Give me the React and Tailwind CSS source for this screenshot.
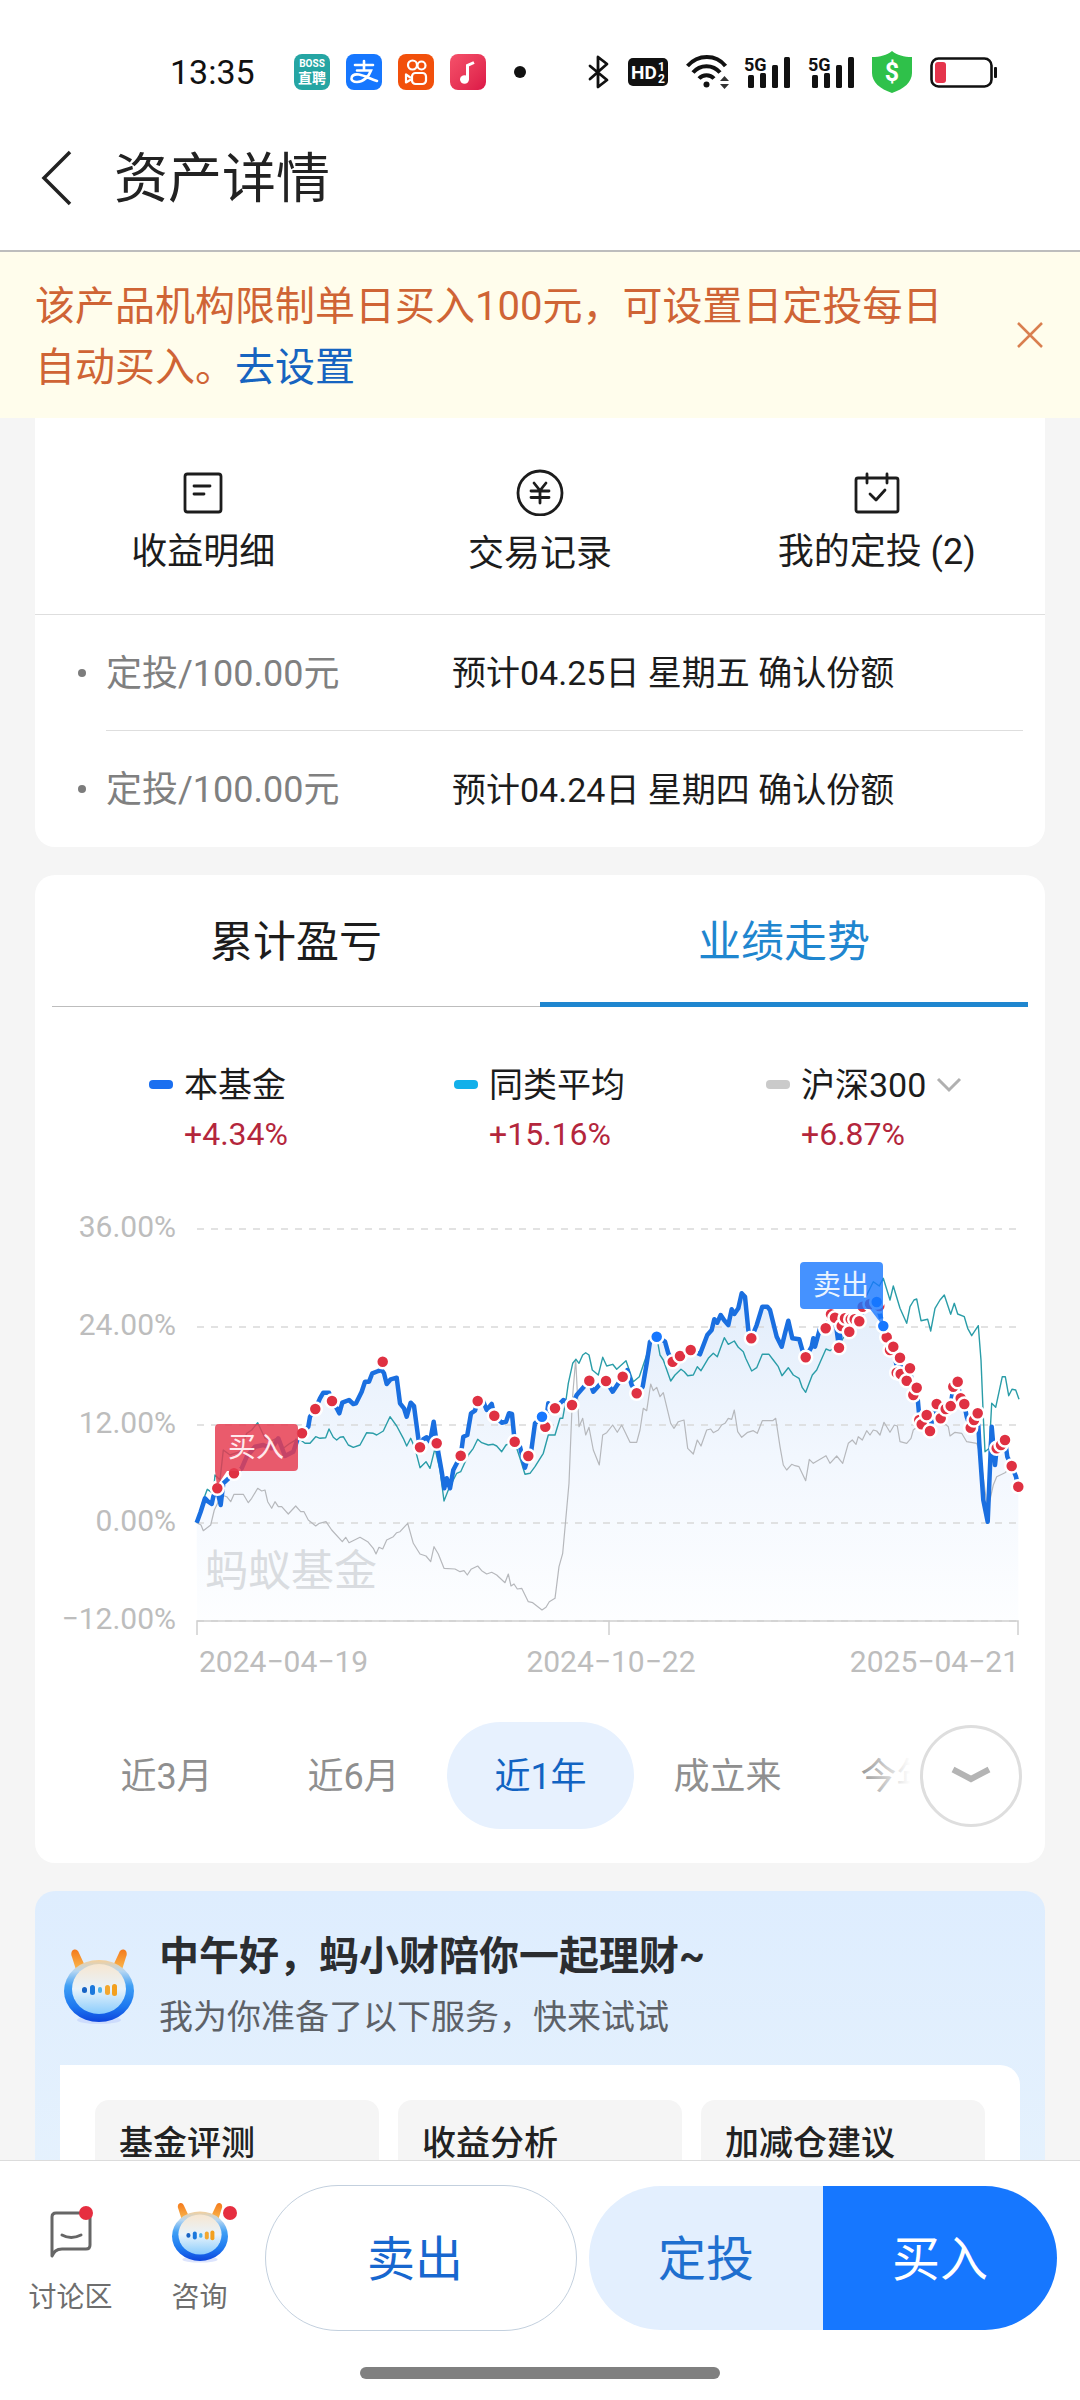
import React, { useState } from "react";

/* ---------- chart data (plotted at 3x, origin at the plot's left inset) ---------- */

const FUND = [
  [50,968],[62,935],[75,895],[85,905],[95,912],[100,890],[110,865],[122,915],[130,850],[162,820],[185,805],[200,770],[225,740],[250,735],[275,745],[295,715],[315,768],[340,755],[352,720],[366,700],[385,680],[390,650],[406,627],[420,595],[430,578],[447,578],[456,603],[470,625],[478,640],[487,608],[507,600],[520,612],[528,610],[545,575],[555,545],[567,545],[577,520],[595,513],[605,510],[612,520],[620,552],[632,538],[650,533],[660,610],[672,625],[680,650],[692,608],[702,618],[715,715],[720,742],[730,718],[740,712],[750,725],[761,665],[770,730],[785,815],[793,865],[800,835],[810,865],[820,810],[842,767],[850,710],[862,705],[873,640],[885,632],[893,603],[910,605],[920,630],[935,612],[943,647],[965,668],[978,665],[987,640],[996,642],[1004,725],[1020,740],[1035,803],[1045,768],[1052,765],[1065,670],[1086,650],[1096,680],[1105,610],[1125,625],[1150,600],[1176,615],[1190,585],[1205,568],[1228,542],[1240,575],[1258,555],[1278,543],
  [1298,575],[1328,530],[1342,510],[1355,555],[1370,580],[1388,560],[1400,490],[1410,425],[1430,410],[1440,415],[1455,425],[1465,460],[1478,485],[1500,468],[1532,450],[1560,463],[1582,405],[1595,390],[1603,358],[1612,368],[1622,345],[1632,360],[1645,375],[1655,328],[1663,342],[1675,325],[1685,280],[1695,290],[1705,390],[1714,415],[1730,375],[1747,320],[1762,320],[1770,330],[1790,410],[1805,440],[1815,400],[1825,362],[1837,415],[1858,418],[1867,450],[1877,472],[1895,440],[1900,415],[1905,440],[1920,385],[1937,385],[1953,345],[1965,352],[1977,443],[1985,375],[1995,355],[2008,395],[2020,355],[2038,364],[2050,320],[2070,320],[2090,310],[2110,378],[2120,412],[2140,440],[2150,500],[2160,473],[2165,525],[2180,542],[2190,505],[2200,585],[2210,563],[2217,640],[2225,670],[2240,645],[2250,693],[2260,640],[2270,612],[2282,655],[2295,625],[2312,618],[2320,560],[2332,545],[2342,595],[2353,612],[2360,650],[2372,683],[2382,660],[2393,640],[2398,730],[2410,900],[2423,965],[2428,850],[2435,680],[2445,795],[2450,745],[2465,735],[2475,720],[2482,770],[2495,798],[2508,830],[2515,860],
];

const PEERS = [
  [50,968],[70,900],[82,868],[100,880],[105,825],[120,840],[130,750],[150,765],[180,755],[200,700],[215,690],[233,668],[255,715],[275,722],[290,715],[310,745],[330,730],[355,715],[375,730],[390,730],[407,710],[420,715],[437,713],[447,687],[460,712],[470,720],[480,712],[490,710],[505,735],[520,742],[540,735],[560,698],[580,700],[590,705],[610,693],[630,650],[650,678],[670,715],[680,738],[692,715],[705,745],[720,803],[738,785],[750,805],[765,745],[780,810],[792,903],[805,870],[830,820],[842,815],[865,765],[880,745],[893,718],[905,728],[925,735],[940,733],[950,738],[965,755],[978,735],[990,730],[1000,735],[1010,745],[1020,775],[1035,823],[1050,820],[1065,800],[1090,760],[1105,705],[1125,705],[1140,655],[1148,655],[1158,600],[1165,550],[1178,490],[1188,478],[1197,490],[1208,465],[1217,458],[1227,465],[1237,510],[1255,525],
  [1268,472],[1280,498],[1298,493],[1310,508],[1338,482],[1360,545],[1378,530],[1395,480],[1415,420],[1430,410],[1440,465],[1450,480],[1472,543],[1485,525],[1503,508],[1513,515],[1523,527],[1540,525],[1552,500],[1563,512],[1585,475],[1600,460],[1612,470],[1633,413],[1645,433],[1663,423],[1675,442],[1690,455],[1697,475],[1715,513],[1730,503],[1747,463],[1767,463],[1780,480],[1795,500],[1806,527],[1825,503],[1840,525],[1857,535],[1867,563],[1877,577],[1897,525],[1910,510],[1938,447],[1950,452],[1980,430],[2010,380],[2040,330],[2065,275],[2080,245],[2098,258],[2110,235],[2130,300],[2140,258],[2160,325],[2180,370],[2190,320],[2202,300],[2210,297],[2223,362],[2243,358],[2252,393],[2265,325],[2280,300],[2293,285],[2312,343],[2323,310],[2333,342],[2353,350],[2363,385],[2375,407],[2395,377],[2403,480],[2410,650],[2415,755],[2428,745],[2435,610],[2447,622],[2467,530],[2476,530],[2486,587],[2496,568],[2507,570],[2517,598],
];

const INDEX = [
  [50,968],[63,975],[70,992],[92,975],[103,930],[125,885],[140,890],[152,905],[162,883],[190,883],[205,908],[215,895],[233,865],[245,873],[255,870],[263,905],[275,925],[285,905],[295,920],[305,920],[325,942],[347,918],[362,935],[372,935],[385,960],[407,978],[418,970],[438,965],[455,990],[487,1025],[497,1012],[507,1028],[540,1012],[563,1025],[580,1045],[588,1062],[597,1042],[608,1047],[620,1020],[640,1010],[650,998],[660,995],[683,970],[700,1030],[720,1062],[738,1068],[752,1085],[762,1040],[775,1062],[792,1105],[825,1107],[840,1115],[852,1112],[862,1125],[873,1108],[893,1098],[905,1112],[920,1122],[935,1117],[950,1125],[975,1148],[985,1122],[993,1158],[1002,1152],[1012,1167],[1025,1165],[1045,1205],[1058,1208],[1086,1230],[1098,1222],[1108,1205],[1125,1195],[1137,1100],[1148,1060],[1157,960],[1167,850],[1177,600],[1187,478],[1197,680],[1208,655],[1217,705],[1227,682],[1240,750],[1258,795],
  [1268,705],[1280,698],[1298,675],[1312,697],[1325,675],[1350,727],[1370,727],[1380,690],[1390,625],[1400,632],[1412,552],[1420,572],[1430,562],[1440,590],[1450,578],[1472,670],[1482,685],[1495,665],[1512,660],[1523,745],[1540,762],[1552,720],[1563,738],[1580,690],[1592,687],[1600,698],[1615,690],[1625,675],[1635,670],[1645,655],[1655,658],[1663,630],[1673,695],[1685,712],[1703,697],[1720,692],[1732,700],[1747,662],[1778,662],[1787,655],[1800,740],[1810,795],[1820,810],[1835,793],[1845,797],[1857,800],[1877,842],[1888,778],[1900,790],[1938,767],[1950,790],[1970,768],[1988,790],[2005,730],[2017,720],[2028,733],[2035,710],[2047,720],[2060,692],[2070,705],[2080,690],[2090,693],[2100,705],[2112,667],[2130,697],[2143,675],[2152,678],[2160,725],[2180,730],[2193,715],[2200,690],[2225,670],[2260,640],[2305,680],[2310,708],[2325,697],[2345,700],[2360,725],[2390,730],[2400,760],[2423,930],[2440,855],[2450,830],[2475,818],[2495,800],[2515,860],
];

const BUYS = [
  [112,865],[162,820],[366,700],[406,627],[456,603],[608,485],[720,742],[770,730],[842,767],[893,603],[943,647],[1004,725],[1045,768],[1096,680],[1125,625],[1176,615],[1228,542],[1278,543],
  [1328,530],[1370,580],[1478,485],[1500,468],[1532,450],[1714,415],[1877,472],[1953,343],[1937,385],[1965,353],[1985,378],[1977,443],[1995,355],[2012,358],[2008,395],[2024,358],[2038,364],[2048,320],[2070,312],[2098,318],[2120,412],[2130,450],[2140,440],[2150,518],[2162,522],[2160,473],[2180,542],[2190,505],[2200,585],[2210,563],[2218,660],[2225,673],[2240,645],[2250,693],[2270,612],[2282,655],[2297,627],[2312,618],[2320,560],[2333,545],[2342,595],[2353,612],[2372,683],[2382,660],[2393,640],[2450,745],[2463,735],[2475,720],[2495,798],[2515,860],
];

const SELLS = [[1086,650],[1430,410],[2090,306],[2110,378]];

const toX = (x) => Math.round((x / 3 + 145) * 10) / 10;
const toY = (y) => Math.round((y / 3) * 10) / 10;
const toPath = (pts) => "M" + pts.map(([x, y]) => toX(x) + " " + toY(y)).join("L");

const GRID = [
  { y: 29, label: "36.00%" },
  { y: 127, label: "24.00%" },
  { y: 225, label: "12.00%" },
  { y: 323, label: "0.00%" },
  { y: 421, label: "−12.00%" },
];

function Chart() {
  const fund = toPath(FUND);
  return (
    <svg viewBox="0 0 1010 480" className="block w-full" role="img" aria-label="业绩走势">
      <defs>
        <linearGradient id="fundArea" x1="0" y1="90" x2="0" y2="421" gradientUnits="userSpaceOnUse">
          <stop offset="0" stopColor="#e2edfb" />
          <stop offset="0.5" stopColor="#f2f7fe" />
          <stop offset="1" stopColor="#fdfeff" />
        </linearGradient>
      </defs>
      <path d={`${fund}L983.3 421L162 421Z`} fill="url(#fundArea)" />
      {GRID.map((g) => (
        <g key={g.label}>
          <line x1="162" x2="983" y1={g.y} y2={g.y} stroke="#d9d9d9" strokeWidth="1.5" strokeDasharray="7 7" />
          <text x="141" y={g.y + 8} textAnchor="end" fontSize="30" fill="#bdbdbd">{g.label}</text>
        </g>
      ))}
      <path d="M162 435V421H983V435M574 421V435" fill="none" stroke="#cfcfcf" strokeWidth="1.5" />
      <text x="170" y="386" fontSize="43" fill="#d9dce0">蚂蚁基金</text>
      <path d={toPath(INDEX)} fill="none" stroke="#b6b8bc" strokeWidth="1.2" strokeLinejoin="round" />
      <path d={toPath(PEERS)} fill="none" stroke="#2a9da8" strokeWidth="1.4" strokeLinejoin="round" />
      <path d={fund} fill="none" stroke="#1a6fe0" strokeWidth="4.5" strokeLinejoin="round" />
      {BUYS.map(([x, y]) => (
        <circle key={`${x}-${y}`} cx={toX(x)} cy={toY(y)} r="6.5" fill="#df3142" stroke="#fff" strokeWidth="2.5" />
      ))}
      {SELLS.map(([x, y]) => (
        <circle key={`${x}-${y}`} cx={toX(x)} cy={toY(y)} r="6.5" fill="#1677ff" stroke="#fff" strokeWidth="2.5" />
      ))}
      <path d="M184 224H259a4 4 0 0 1 4 4V267a4 4 0 0 1-4 4H192L182 286L180 271V228a4 4 0 0 1 4-4Z" fill="#e63c50" fillOpacity="0.84" />
      <text x="221" y="257" textAnchor="middle" fontSize="28" fill="#ffe9ec">买入</text>
      <path d="M769 62H844a4 4 0 0 1 4 4V126L835 109H769a4 4 0 0 1-4-4V66a4 4 0 0 1 4-4Z" fill="#1677ff" fillOpacity="0.8" />
      <text x="806" y="95" textAnchor="middle" fontSize="28" fill="#eaf4ff">卖出</text>
      <g fontSize="30" fill="#bdbdbd">
        <text x="164" y="472">2024−04−19</text>
        <text x="576" y="472" textAnchor="middle">2024−10−22</text>
        <text x="984" y="472" textAnchor="end">2025−04−21</text>
      </g>
    </svg>
  );
}

/* ---------- icons ---------- */

function Signal() {
  return (
    <svg viewBox="0 0 46 34" className="h-[34px] w-[46px] overflow-visible" aria-hidden="true">
      <text x="0" y="16" fontSize="18" fontWeight="700" fill="#111">5G</text>
      <rect x="4" y="20" width="6" height="13" rx="1.5" fill="#111" />
      <rect x="16" y="18" width="6" height="15" rx="1.5" fill="#111" />
      <rect x="28" y="10" width="6" height="23" rx="1.5" fill="#111" />
      <rect x="40" y="2" width="6" height="31" rx="1.5" fill="#111" />
    </svg>
  );
}

function Mascot({ id, className }) {
  return (
    <svg viewBox="0 0 70 76" className={className} aria-hidden="true">
      <defs>
        <linearGradient id={`${id}-ring`} x1="0" y1="0" x2="0" y2="1">
          <stop offset="0" stopColor="#f6cf98" />
          <stop offset="0.18" stopColor="#b5d6f2" />
          <stop offset="0.42" stopColor="#3f9ff5" />
          <stop offset="0.75" stopColor="#1d78f0" />
          <stop offset="1" stopColor="#0d45dd" />
        </linearGradient>
        <linearGradient id={`${id}-face`} x1="0" y1="0" x2="0" y2="1">
          <stop offset="0" stopColor="#f7e6d0" />
          <stop offset="0.5" stopColor="#e8f3fb" />
          <stop offset="1" stopColor="#8accfc" />
        </linearGradient>
        <linearGradient id={`${id}-horn`} x1="0" y1="0" x2="0" y2="1">
          <stop offset="0" stopColor="#f47a1c" />
          <stop offset="1" stopColor="#fbc255" />
        </linearGradient>
      </defs>
      <ellipse cx="35" cy="71" rx="22" ry="4" fill="#b9c9fb" opacity="0.5" />
      <path d="M8 2C11-1 14 1 15 4L22 19L13 24L8 8C7 6 7 4 8 2Z" fill={`url(#${id}-horn)`} />
      <path d="M62 2C59-1 56 1 55 4L48 19L57 24L62 8C63 6 63 4 62 2Z" fill={`url(#${id}-horn)`} />
      <ellipse cx="35" cy="42" rx="35" ry="31" fill={`url(#${id}-ring)`} />
      <ellipse cx="35" cy="40" rx="27" ry="25" fill={`url(#${id}-face)`} />
      <rect x="18" y="38" width="5" height="6" rx="2.5" fill="#1763c4" />
      <rect x="26" y="36" width="5" height="10" rx="2.5" fill="#1b78dc" />
      <rect x="34" y="38" width="4" height="6" rx="2" fill="#4eb1e8" />
      <rect x="41" y="36" width="5" height="10" rx="2.5" fill="#f3a72e" />
      <rect x="48" y="35" width="5" height="12" rx="2.5" fill="#f3a01e" />
    </svg>
  );
}

function StatusBar() {
  return (
    <div className="flex h-[106px] items-center pt-[38px] pr-[83px] pl-[170px] text-[#111]">
      <span className="w-[124px] text-[34px] leading-none">13:35</span>
      <div className="flex items-center gap-4">
        <div className="flex h-9 w-9 flex-col items-center justify-center rounded-lg bg-[#25a5a3] text-white">
          <span className="text-[10px] leading-[12px] font-bold">BOSS</span>
          <span className="text-[14px] leading-[16px] font-bold">直聘</span>
        </div>
        <div className="flex h-9 w-9 items-center justify-center rounded-lg bg-[#1677ff]">
          <svg viewBox="0 0 36 36" className="h-9 w-9" fill="none" stroke="#fff" strokeWidth="2.6" strokeLinecap="round" aria-hidden="true">
            <path d="M9 11H27M18 7V16M11 16.500H25C23 22 18 28 11 28C7 28 5 26 5.500 24C6 21 9 20 13 20.500C19 21.500 24 25 31 27" />
          </svg>
        </div>
        <div className="flex h-9 w-9 items-center justify-center rounded-lg bg-[#f2500b]">
          <svg viewBox="0 0 36 36" className="h-9 w-9" fill="none" stroke="#fff" strokeWidth="2.2" strokeLinejoin="round" aria-hidden="true">
            <circle cx="14.500" cy="11" r="4.500" />
            <circle cx="23.500" cy="11.500" r="4" />
            <rect x="14" y="19" width="14" height="11" rx="3.500" />
            <path d="M13 24L8 20.500V28.500L13 25.500" />
          </svg>
        </div>
        <div className="flex h-9 w-9 items-center justify-center rounded-lg bg-gradient-to-br from-[#f5506a] to-[#dc1447]">
          <svg viewBox="0 0 36 36" className="h-9 w-9" aria-hidden="true">
            <ellipse cx="14.500" cy="25.500" rx="4.500" ry="4.200" fill="#fff" />
            <path d="M17.500 25.500V11.500L24 8.500" fill="none" stroke="#fff" strokeWidth="3" />
          </svg>
        </div>
      </div>
      <span className="ml-7 h-3 w-3 rounded-full bg-[#111]" />
      <div className="ml-auto flex items-center gap-[18px]">
        <svg viewBox="0 0 22 34" className="h-[34px] w-[22px]" fill="none" stroke="#111" strokeWidth="2.8" strokeLinecap="round" strokeLinejoin="round" aria-hidden="true">
          <path d="M2 11L19 25L10 32V2L19 9L2 24" />
        </svg>
        <svg viewBox="0 0 40 28" className="h-7 w-10" aria-hidden="true">
          <rect width="40" height="28" rx="5" fill="#111" />
          <text x="3" y="21" fontSize="19" fontWeight="700" fill="#fff">HD</text>
          <text x="30" y="13" fontSize="12" fontWeight="700" fill="#fff">1</text>
          <text x="30" y="25" fontSize="12" fontWeight="700" fill="#fff">2</text>
        </svg>
        <svg viewBox="0 0 44 34" className="-mr-1 h-[34px] w-11" fill="none" stroke="#111" strokeWidth="4" aria-hidden="true">
          <path d="M1.500 11C12-1 30-1 39.500 11M7 17.500C14 9 27 9 34 17.500M13 23.500C17 19 24 19 28 23.500" />
          <circle cx="20.500" cy="29.500" r="3" fill="#111" stroke="none" />
          <path d="M34 26L38.500 21L43 26ZM34 29H43L38.500 34Z" fill="#333" stroke="none" />
        </svg>
        <Signal />
        <Signal />
        <svg viewBox="0 0 40 42" className="h-[42px] w-10" aria-hidden="true">
          <path d="M20 0C25 4 32 6 40 6V22C40 31 32 38 20 42C8 38 0 31 0 22V6C8 6 15 4 20 0Z" fill="#2fc14a" />
          <text x="20" y="30" textAnchor="middle" fontSize="25" fontWeight="700" fill="#fff">$</text>
        </svg>
        <svg viewBox="0 0 67 31" className="h-[31px] w-[67px]" aria-hidden="true">
          <rect x="1.500" y="1.500" width="60" height="28" rx="7" fill="#fff" stroke="#111" strokeWidth="2.600" />
          <rect x="5" y="5" width="11" height="21" rx="3" fill="#e5344c" />
          <rect x="64" y="10" width="3" height="11" rx="1" fill="#111" />
        </svg>
      </div>
    </div>
  );
}

/* ---------- sections ---------- */

const PLANS = [
  "预计04.25日 星期五 确认份额",
  "预计04.24日 星期四 确认份额",
];

const LEGEND = [
  { name: "本基金", value: "+4.34%", swatch: "bg-[#1a6ff0]" },
  { name: "同类平均", value: "+15.16%", swatch: "bg-[#12b0ea]" },
  { name: "沪深300", value: "+6.87%", swatch: "bg-[#cacaca]", menu: true },
];

const RANGES = ["近3月", "近6月", "近1年", "成立来", "今年来"];

function PlanCard() {
  return (
    <section className="rounded-b-[20px] bg-white">
      <div className="grid h-[197px] grid-cols-3 border-b border-[#dedede] pt-[50px] text-[36px] leading-[44px] text-[#1c1c1c]">
        <button className="flex flex-col items-center gap-3.5">
          <svg viewBox="0 0 48 48" className="h-12 w-12" fill="none" stroke="#1c1c1c" strokeWidth="2.800" strokeLinecap="round" aria-hidden="true">
            <rect x="6" y="6" width="36" height="38" rx="2.500" />
            <path d="M15 18H31M15 26H25" />
          </svg>
          收益明细
        </button>
        <button className="flex flex-col items-center gap-4">
          <svg viewBox="0 0 48 48" className="h-12 w-12" fill="none" stroke="#1c1c1c" strokeWidth="2.800" strokeLinecap="round" aria-hidden="true">
            <circle cx="24" cy="25" r="22" />
            <path d="M18 15L24 22.500L30 15M24 22.500V35M15 23H33M15 29.500H33" />
          </svg>
          交易记录
        </button>
        <button className="flex flex-col items-center gap-3.5">
          <svg viewBox="0 0 48 48" className="h-12 w-12" fill="none" stroke="#1c1c1c" strokeWidth="2.800" strokeLinecap="round" strokeLinejoin="round" aria-hidden="true">
            <rect x="3" y="10" width="42" height="34" rx="2" />
            <path d="M14 6V15M34 6V15M17 26L23 32L32 22" />
          </svg>
          我的定投 (2)
        </button>
      </div>
      <ul>
        {PLANS.map((when, i) => (
          <li key={when} className="flex h-[116px] items-center pl-[43px]">
            <span className="mr-[20px] h-2 w-2 shrink-0 rounded-full bg-[#7c7c7c]" />
            <div className={i === 0 ? "mr-[22px] flex h-full flex-1 items-center border-b border-[#dedede] pt-0.5" : "mr-[22px] flex h-full flex-1 items-center pt-0.5"}>
              <span className="w-[346px] text-[36px] text-[#808080]">定投/100.00元</span>
              <span className="text-[34px] text-[#1c1c1c]">{when}</span>
            </div>
          </li>
        ))}
      </ul>
    </section>
  );
}

function TrendCard() {
  const [range, setRange] = useState("近1年");
  return (
    <section className="rounded-[20px] bg-white pb-[34px]">
      <div role="tablist" className="mx-[17px] grid h-[132px] grid-cols-2 text-[43px]">
        <button role="tab" aria-selected="false" className="border-b border-[#bdbdbd] pt-1 text-[#1c1c1c]">累计盈亏</button>
        <button role="tab" aria-selected="true" className="border-b-[5px] border-[#1f86cf] pt-2 text-[#1f86cf]">业绩走势</button>
      </div>
      <div className="grid grid-cols-[305fr_312fr_279fr] pt-[54px] pl-[114px]">
        {LEGEND.map((item) => (
          <div key={item.name} className="flex gap-[11px]">
            <span className={`mt-[19px] h-[9px] w-6 rounded ${item.swatch}`} />
            <div>
              <div className="flex items-center gap-2 text-[34px] leading-[48px] text-[#1c1c1c]">
                {item.name}
                {item.menu && (
                  <svg viewBox="0 0 30 24" className="h-6 w-[30px]" fill="none" stroke="#b0b0b0" strokeWidth="3" aria-hidden="true">
                    <path d="M4 6L15 17L26 6" />
                  </svg>
                )}
              </div>
              <div className="text-[32px] leading-[50px] text-[#b4263c]">{item.value}</div>
            </div>
          </div>
        ))}
      </div>
      <div className="mt-[41px]">
        <Chart />
      </div>
      <div className="relative mt-[42px] overflow-hidden pl-[38px]">
        <div className="flex">
          {RANGES.map((r) => (
            <button
              key={r}
              onClick={() => setRange(r)}
              className={
                r === range
                  ? "h-[107px] w-[187px] shrink-0 rounded-full bg-[#e7f1fe] pt-0.5 text-[36px] text-[#1163c2]"
                  : "h-[107px] w-[187px] shrink-0 rounded-full pt-0.5 text-[36px] text-[#8f8f8f]"
              }
            >
              {r}
            </button>
          ))}
        </div>
        <div className="absolute inset-y-0 right-0 flex items-center">
          <span className="h-full w-16 bg-gradient-to-r from-white/0 to-white to-85%" />
          <div className="flex h-full items-center bg-white pr-[23px]">
            <button aria-label="更多" className="flex h-[102px] w-[102px] items-center justify-center rounded-full border-[3px] border-[#dedede] bg-white">
              <svg viewBox="0 0 40 24" className="h-6 w-10" fill="none" stroke="#b4b4b4" strokeWidth="6" aria-hidden="true">
                <path d="M2 5.500L20 15L38 5.500" />
              </svg>
            </button>
          </div>
        </div>
      </div>
    </section>
  );
}

function AssistantCard() {
  return (
    <section className="rounded-t-[20px] bg-gradient-to-b from-[#deedfe] to-[#e6f2fd] px-[25px] pt-[36px]">
      <div className="flex items-center gap-[25px] pl-1">
        <Mascot id="assistant" className="h-[76px] w-[70px]" />
        <div>
          <h2 className="text-[40px] leading-[60px] font-bold text-[#2b2d30]">中午好，蚂小财陪你一起理财~</h2>
          <p className="text-[34px] leading-[60px] text-[#5d6167]">我为你准备了以下服务，快来试试</p>
        </div>
      </div>
      <div className="mt-[18px] grid grid-cols-3 gap-[19px] rounded-tr-[20px] bg-white px-[35px] pt-[35px]">
        {["基金评测", "收益分析", "加减仓建议"].map((t) => (
          <button key={t} className="h-[120px] rounded-[14px] bg-[#f5f5f5] px-6 pt-[18px] text-left align-top text-[34px] leading-[50px] font-medium text-[#222]">
            <span className="block h-full">{t}</span>
          </button>
        ))}
      </div>
    </section>
  );
}

function BottomBar() {
  return (
    <footer className="border-t border-[#dcdcdc] bg-white">
      <div className="flex items-start pt-6 pr-[23px] pl-[18px]">
        <button className="flex w-[105px] flex-col items-center gap-3 pt-4 text-[28px] leading-[42px] text-[#6e6e6e]">
          <span className="relative">
            <svg viewBox="0 0 56 64" className="h-16 w-14" fill="none" stroke="#666" strokeWidth="3" strokeLinejoin="round" strokeLinecap="round" aria-hidden="true">
              <path d="M9 55V16Q9 12 13 12H43Q47 12 47 16V44Q47 48 43 48H19C13 48 11 51 9 55Z" />
              <path d="M19 34Q28 39 38 34" />
            </svg>
            <span className="absolute top-[5px] right-[6px] h-3.5 w-3.5 rounded-full bg-[#e62e40]" />
          </span>
          讨论区
        </button>
        <button className="ml-6 flex w-[105px] flex-col items-center gap-3 pt-4 text-[28px] leading-[42px] text-[#6e6e6e]">
          <span className="relative">
            <Mascot id="consult" className="h-16 w-14" />
            <span className="absolute top-[5px] -right-[9px] h-3.5 w-3.5 rounded-full bg-[#e62e40]" />
          </span>
          咨询
        </button>
        <div className="ml-[13px] grid flex-1 grid-cols-[2fr_3fr] gap-3 text-[48px]">
          <button className="h-[146px] rounded-full border border-[#c3d0de] pt-1 pr-3 text-[#1767cf]">卖出</button>
          <div className="grid h-[146px] grid-cols-2 py-px">
            <button className="rounded-l-full bg-[#e3effe] pt-1 text-[#1f6fcf]">定投</button>
            <button className="rounded-r-full bg-[#1677ff] pt-1 text-white">买入</button>
          </div>
        </div>
      </div>
      <div className="flex justify-center pt-9 pb-[21px]">
        <span className="h-3 w-1/3 rounded-full bg-[#808080]" />
      </div>
    </footer>
  );
}

export default function App() {
  return (
    <div className="flex h-screen flex-col bg-[#f5f5f5] font-[Roboto,'Noto_Sans_CJK_SC',sans-serif]">
      <header className="bg-white">
        <StatusBar />
        <div className="flex h-[146px] items-center border-b-2 border-[#bdbdbd] pl-9">
          <button aria-label="返回">
            <svg viewBox="0 0 40 56" className="h-14 w-10" fill="none" stroke="#222" strokeWidth="3.500" aria-hidden="true">
              <path d="M34 2L8 28L34 54" />
            </svg>
          </button>
          <h1 className="ml-[38px] pt-1 text-[54px] leading-[72px] text-[#222]">资产详情</h1>
        </div>
      </header>
      <div className="flex items-center bg-[#fffdec] py-5 pr-[36px] pl-[35px]">
        <p className="flex-1 pt-1 pr-10 text-[40px] leading-[61px] text-[#cf6435]">
          该产品机构限制单日买入100元，可设置日定投每日自动买入。
          <a href="#plan" className="text-[#1664c0]">去设置</a>
        </p>
        <button aria-label="关闭">
          <svg viewBox="0 0 28 28" className="h-7 w-7" fill="none" stroke="#d97f50" strokeWidth="2.500" aria-hidden="true">
            <path d="M2 2L26 26M26 2L2 26" />
          </svg>
        </button>
      </div>
      <main className="flex min-h-0 flex-1 flex-col gap-7 overflow-hidden px-[35px]">
        <PlanCard />
        <TrendCard />
        <AssistantCard />
      </main>
      <BottomBar />
    </div>
  );
}
